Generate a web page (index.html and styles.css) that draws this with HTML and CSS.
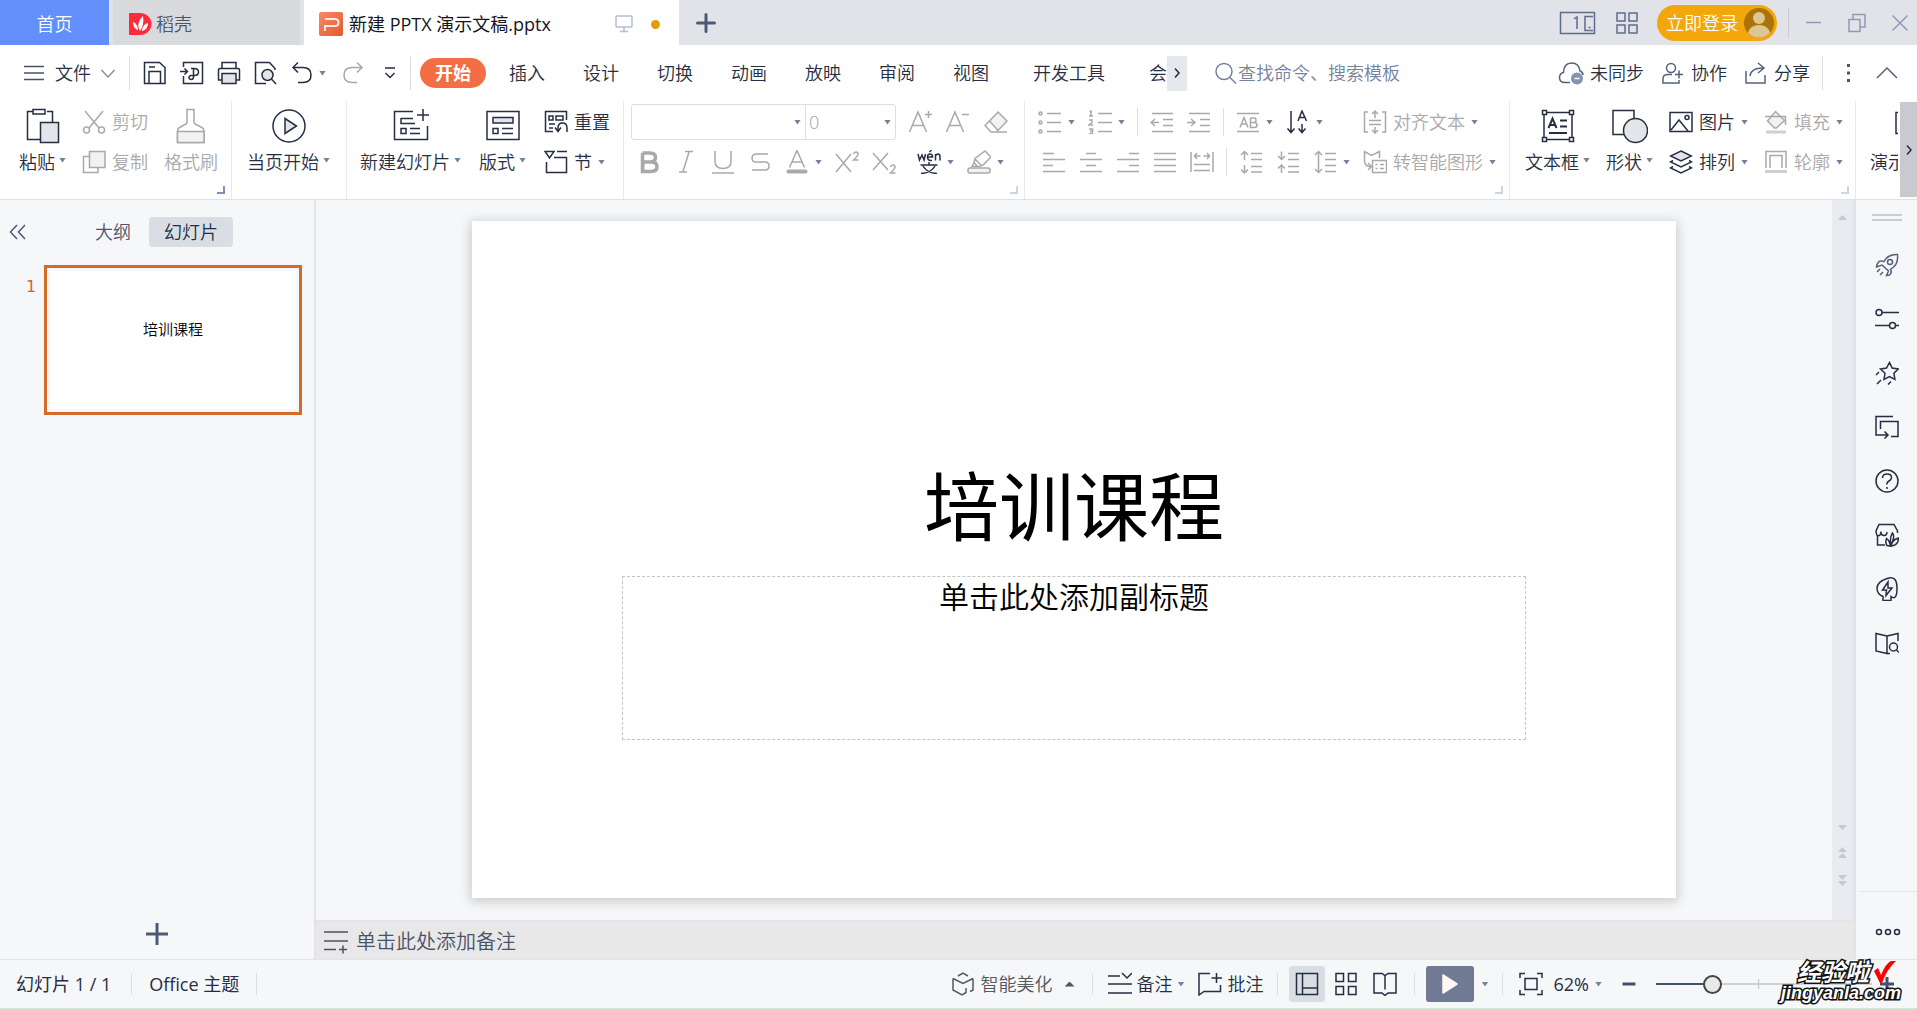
FILE: index.html
```html
<!DOCTYPE html>
<html lang="zh-CN">
<head>
<meta charset="utf-8">
<title>新建 PPTX 演示文稿.pptx</title>
<link rel="stylesheet" href="styles.css">
</head>
<body>
<header class="titlebar">
  <button class="doc-tab home-tab">首页</button>
  <button class="doc-tab docer-tab">
    <svg width="23" height="24" viewBox="0 0 23 24"><path d="M0 1h11a11.500 11 0 0 1 0 22H0z" fill="#ff2b3a"/><path d="M11 19c-3-4-2-11 3-15 1 6 0 11-3 15zM9 18c-4-1-5-5-5-8 3 1 5 4 5 8zM13 19c0-4 2-7 6-8 0 4-2 7-6 8z" fill="#fff"/></svg>
    <span>稻壳</span>
  </button>
  <div class="doc-tab active-tab">
    <svg width="24" height="24" viewBox="0 0 24 24"><defs><linearGradient id="pg" x1="0" y1="0" x2="1" y2="1"><stop offset="0" stop-color="#f88a6a"/><stop offset="1" stop-color="#e35a2a"/></linearGradient></defs><rect width="24" height="24" rx="2" fill="url(#pg)"/><path class="brand-stroke" d="M6 7h10q3.500 0 3.500 3.500T16 14H6v5"/></svg>
    <span class="doc-name">新建 PPTX 演示文稿.pptx</span>
    <svg class="monitor" width="18" height="18" viewBox="0 0 18 18"><path d="M2 1h14q1 0 1 1v9q0 1-1 1H2q-1 0-1-1V2q0-1 1-1zM9 12v4M5 16.500h8"/></svg>
    <i class="unsaved"></i>
  </div>
  <button class="new-tab" aria-label="新建"><svg width="20" height="20" viewBox="0 0 20 20"><path d="M10 1.500v17M1.500 10h17"/></svg></button>
  <div class="window-tools">
    <button aria-label="单页"><svg width="38" height="24" viewBox="0 0 38 24"><path d="M1.500 1.500h34v21h-34zM34 5.500h-8v14h8M29.500 16.500h2"/><path d="M15 8l3-2v12"/></svg></button>
    <button aria-label="应用"><svg width="24" height="24" viewBox="0 0 24 24"><path d="M2 2h8v8H2zM14 2h8v8h-8zM2 14h8v8H2zM14 14h8v8h-8z"/></svg></button>
    <button class="login"><span>立即登录</span><svg width="30" height="30" viewBox="0 0 30 30"><circle cx="15" cy="15" r="15" fill="#a97408"/><circle cx="15" cy="10" r="6" fill="#dfc494"/><path d="M4 25q2-8 11-8t11 8a15 15 0 0 1-22 0z" fill="#dfc494"/></svg></button>
    <i class="bar"></i>
    <button class="win" aria-label="最小化"><svg width="18" height="20" viewBox="0 0 18 20"><path d="M1 9.500h15"/></svg></button>
    <button class="win" aria-label="还原"><svg width="18" height="20" viewBox="0 0 18 20"><path d="M1 6.500h11v12H1zM5 6V1.500h12V14h-5"/></svg></button>
    <button class="win" aria-label="关闭"><svg width="18" height="20" viewBox="0 0 18 20"><path d="M1.500 2.500l15 15M16.500 2.500l-15 15"/></svg></button>
  </div>
</header>

<nav class="menubar">
  <button class="file-menu">
    <svg width="24" height="24" viewBox="0 0 24 24"><path d="M2 5.500h20M2 12h20M2 18.500h20"/></svg>
    <span>文件</span>
    <svg width="16" height="24" viewBox="0 0 16 24" class="thin"><path d="M1.500 9l6.500 7 6.500-7"/></svg>
  </button>
  <i class="bar"></i>
  <div class="quick">
    <button aria-label="保存"><svg width="24" height="24" viewBox="0 0 24 24"><path d="M1.500 1.500h15l5.500 5V22.500h-20.500zM6 22v-11.500h11.500V22M6 6h6"/></svg></button>
    <button aria-label="输出"><svg width="24" height="24" viewBox="0 0 24 24"><path d="M3.500 6V1.500h19v21h-19V15M0 10.500h7.500M4.500 7.500l3 3-3 3M11 7.500h3q4.500 0 4.500 3.500t-4 3.500h-3q-2.500 0-2.500 2t2.500 2q2 0 2-3V8"/></svg></button>
    <button aria-label="打印"><svg width="24" height="24" viewBox="0 0 24 24"><path d="M5 7V1.500h14V7M5 19H1.500V9q0-1.500 1.500-1.500h18q1.500 0 1.500 1.500v10H19"/><path class="tint" d="M5 12.500h14v10H5z"/></svg></button>
    <button aria-label="预览"><svg width="24" height="24" viewBox="0 0 24 24"><path d="M12 22.500H1.500v-21h14l5.500 6V9"/><circle class="tint" cx="13.500" cy="14" r="5.500"/><path d="M17.500 18l4.500 5"/></svg></button>
    <button class="drop" aria-label="撤销"><svg width="22" height="24" viewBox="0 0 22 24"><path d="M7 1.500L2 6.500l5 5M2.500 6.500H12q8 0 8 7.500T12 21.500H7"/></svg><i class="caret"></i></button>
    <button class="off" aria-label="恢复"><svg width="22" height="24" viewBox="0 0 22 24"><path d="M15 1.500l5 5-5 5M19.500 6.500H10q-8 0-8 7.500t8 7.500h5"/></svg></button>
    <button aria-label="更多"><svg width="14" height="24" viewBox="0 0 14 24"><path d="M2 7h10M2.500 12l4.500 4.500L11.500 12"/></svg></button>
  </div>
  <i class="bar"></i>
  <div class="tabs">
    <button class="current">开始</button>
    <button>插入</button><button>设计</button><button>切换</button><button>动画</button><button>放映</button><button>审阅</button><button>视图</button><button class="dev">开发工具</button><button>会</button>
  </div>
  <button class="tab-next" aria-label="更多选项卡"><svg width="8" height="12" viewBox="0 0 8 12"><path d="M2 1.500L6 6l-4 4.500"/></svg></button>
  <label class="search"><svg width="24" height="24" viewBox="0 0 24 24"><circle cx="10" cy="10.500" r="8"/><path d="M16 16.500l6 6"/></svg><input type="text" aria-label="搜索" placeholder="查找命令、搜索模板"></label>
  <div class="share">
    <button><svg width="26" height="24" viewBox="0 0 26 24"><path d="M12 21.500H7q-5.500 0-5.500-5 0-4 4-5Q6 2 13.500 2t8.500 8q3 1 3 4"/><circle cx="19" cy="17.500" r="6" class="solid"/><path d="M16.500 17.500h5" stroke="#fff"/></svg><span>未同步</span></button>
    <button><svg width="24" height="24" viewBox="0 0 24 24"><circle cx="10" cy="7" r="4.500"/><path d="M11 13.500H7q-5 0-5 4v4.500h16v-3M18 9.500v8M14 13.500h8"/></svg><span>协作</span></button>
    <button><svg width="24" height="24" viewBox="0 0 24 24"><path d="M2 10v12h19v-8M6 15q1-8 13-8M14 2l6 5-6 5"/></svg><span>分享</span></button>
  </div>
  <i class="bar"></i>
  <button class="tail" aria-label="更多"><svg width="4" height="24" viewBox="0 0 4 24"><path class="solid-dark" d="M0 3h3v3H0zM0 10.500h3v3H0zM0 18h3v3H0z"/></svg></button>
  <button class="tail" aria-label="折叠功能区"><svg width="24" height="24" viewBox="0 0 24 24"><path d="M2 17L12 7l10 10"/></svg></button>
</nav>

<section class="ribbon">
  <div class="groups">
    <div class="group paste-group">
      <button class="big"><svg width="36" height="36" viewBox="0 0 36 36"><path d="M8 3.500H2.500v28H15M22 3.500h5.500V14M8 1.500h12v4.500H8z"/><path class="tint" d="M15.500 14.500h18v20h-18z"/></svg><span>粘贴<i class="caret"></i></span></button>
      <div class="stack">
        <button class="off"><svg width="24" height="24" viewBox="0 0 24 24"><path d="M3 1l14 17M21 1L7 18"/><circle cx="4.500" cy="20" r="3"/><circle cx="19.500" cy="20" r="3"/></svg><span>剪切</span></button>
        <button class="off"><svg width="24" height="24" viewBox="0 0 24 24"><path d="M7 6.500H1.500v16H16V18"/><path class="tint" d="M7.500 1.500H23v16H7.500z"/></svg><span>复制</span></button>
      </div>
      <button class="big off"><svg width="36" height="36" viewBox="0 0 36 36"><path d="M14 1.500h7V14q0 2 3 3l5 2.500q2 1 2 4v11H4.500v-11q0-3 2-4L11 17q3-1 3-3z"/><path class="tint" d="M4.500 23.500H31v11H4.500z"/></svg><span>格式刷</span></button>
      <i class="launcher"></i>
    </div>
    <div class="group play-group">
      <button class="big"><svg width="36" height="36" viewBox="0 0 36 36"><circle cx="18" cy="18" r="16"/><path class="tint" d="M14 10.500L25.500 18 14 25.500z"/></svg><span>当页开始<i class="caret"></i></span></button>
    </div>
    <div class="group slide-group">
      <button class="big"><svg width="36" height="36" viewBox="0 0 36 36"><path d="M20 3.500H1.500v28h33V18M8 10.500h12M8 10v5.500h14M8 20.500h5v5H8zM17 20.500h10M17 25.500h10M30 1v12M24 7h12"/></svg><span>新建幻灯片<i class="caret"></i></span></button>
      <button class="big"><svg width="36" height="36" viewBox="0 0 36 36"><path d="M2 3.500h32v28H2z"/><path class="tint" d="M8 9.500h20v5.500H8z"/><path d="M8 20.500h5v5H8zM17 20.500h11M17 25.500h11"/></svg><span>版式<i class="caret"></i></span></button>
      <div class="stack">
        <button><svg width="24" height="24" viewBox="0 0 24 24"><path d="M9 21.500H1.500v-20H22.500V10M5 6h4v4H5zM12 6h7v4h-7zM5 14h6M5 18h4M11 17.500l3 4 3-4M14 21v-3q0-5 4.500-5t4.500 5v4"/></svg><span>重置</span></button>
        <button><svg width="24" height="24" viewBox="0 0 24 24"><path d="M1 1.500h9L5.500 8zM2.500 12v10.500h20v-15H10M13 1.500h10"/></svg><span>节</span><i class="caret"></i></button>
      </div>
    </div>
    <div class="group font-group">
      <div class="stack">
        <div class="row">
          <div class="combos">
            <label class="combo face"><select aria-label="字体"><option></option></select><i class="caret"></i></label>
            <label class="combo size"><select aria-label="字号"><option>0</option></select><i class="caret"></i></label>
          </div>
          <button class="off" aria-label="增大字号"><svg width="24" height="24" viewBox="0 0 24 24"><path d="M1.500 22l8.500-20 8.500 20M4.500 15.500h11M17 4.500h7M20.500 1v7"/></svg></button>
          <button class="off" aria-label="减小字号"><svg width="24" height="24" viewBox="0 0 24 24"><path d="M1.500 22l8.500-20 8.500 20M4.500 15.500h11M17 4.500h7"/></svg></button>
          <button class="off eraser" aria-label="清除格式"><svg width="24" height="24" viewBox="0 0 24 24"><path class="tint" d="M14 2l9 9-9 9.500L5.500 11z"/><path d="M5.500 11L1 15.500l6 6.500h16M14 20.500L12 22.500"/></svg></button>
        </div>
        <div class="row tools">
          <button class="off" aria-label="加粗"><svg width="24" height="24" viewBox="0 0 24 24"><path d="M5.500 3H13q5.500 0 5.500 4.500T13 12H6M6 12h8q6 0 6 4.700t-6 4.800H5.500zM5.500 3v18" stroke-width="3.500"/></svg></button>
          <button class="off" aria-label="倾斜"><svg width="24" height="24" viewBox="0 0 24 24"><path d="M11 1.500h8M5 22h8M15 2L9 21.500"/></svg></button>
          <button class="off" aria-label="下划线"><svg width="24" height="24" viewBox="0 0 24 24"><path d="M4 1v10q0 7.500 8 7.500t8-7.500V1M1 23h22"/></svg></button>
          <button class="off" aria-label="删除线"><svg width="24" height="24" viewBox="0 0 24 24"><path d="M20 4H9Q4 4 4 8t4 4h9q4 0 4 4t-4 4H4"/></svg></button>
          <button class="off drop" aria-label="字体颜色"><svg width="24" height="24" viewBox="0 0 24 24"><path d="M4.500 17.500l7.500-17 7.500 17M7 12h10"/><path d="M3.500 21.500h17" stroke-width="4" stroke-linecap="round"/></svg><i class="caret"></i></button>
          <button class="off" aria-label="上标"><svg width="24" height="24" viewBox="0 0 24 24"><path d="M1 4l15 18M16 4L1 22M18.500 4q.5-2 2.500-2t2 2q0 2-4.500 6h5"/></svg></button>
          <button class="off" aria-label="下标"><svg width="24" height="24" viewBox="0 0 24 24"><path d="M1 3l15 17M16 3L1 20M18.500 17q.5-2 2.500-2t2 2q0 2-4.500 6h5"/></svg></button>
          <button class="drop pinyin" aria-label="拼音"><svg width="24" height="24" viewBox="0 0 24 24"><path d="M1 4l1.500 6L5 5l2 5L8.500 4M10.500 7h5q0-3-2.500-3t-2.500 3 2.500 3.500h2M12.500 2L14.500 0M18.500 10.500V4M18.500 6q1-2 2.500-2 2 0 2 3v3.500M12 12v2.500M3.500 15h17M6 16q4 7 14 7.500M18 16q-4 7-14 7.500"/></svg><i class="caret"></i></button>
          <button class="off drop" aria-label="突出显示"><svg width="24" height="24" viewBox="0 0 24 24"><path d="M5 16.500l2-4 1-4L18 1l6 6-8 8-4 1.500zM8 9l7 7M7 12.500l3.500 4"/><rect class="tint" x="1" y="18" width="22" height="5" rx="2"/></svg><i class="caret"></i></button>
        </div>
      </div>
      <i class="launcher pale"></i>
    </div>
    <div class="group para-group">
      <div class="stack">
        <div class="row">
          <button class="off drop" aria-label="项目符号"><svg width="24" height="24" viewBox="0 0 24 24"><path d="M9 3.500h14M9 12.500h14M9 21.500h14"/><circle cx="2.500" cy="3.500" r="1.500"/><circle cx="2.500" cy="12.500" r="1.500"/><circle cx="2.500" cy="21.500" r="1.500"/></svg><i class="caret"></i></button>
          <button class="off drop" aria-label="编号"><svg width="24" height="24" viewBox="0 0 24 24"><path d="M10 3.500h14M10 12.500h14M10 21.500h14M1.500 2L3 1v5M1 6h4M1 10h3v2.500L1 15h4M1 19h3.500v4.500H1M2 21h2"/></svg><i class="caret"></i></button>
          <i class="bar"></i>
          <button class="off" aria-label="减少缩进"><svg width="24" height="24" viewBox="0 0 24 24"><path d="M2 3.500h21M13 9.500h10M13 15.500h10M2 21.500h21M1 12.500h8M5 9l-4 3.500L5 16"/></svg></button>
          <button class="off" aria-label="增加缩进"><svg width="24" height="24" viewBox="0 0 24 24"><path d="M2 3.500h21M13 9.500h10M13 15.500h10M2 21.500h21M0 12.500h8M4 9l4 3.500L4 16"/></svg></button>
          <i class="bar"></i>
          <button class="off drop" aria-label="文字方向"><svg width="24" height="24" viewBox="0 0 24 24"><path d="M1 3.500h22M1 21.500h22M4 17.500L8 7.500l4 10M5.500 14h5M14.500 8v9.500h4q2.500 0 2.500-2.500t-2.500-2.500h-4M14.500 8H18q2 0 2 2.200t-2 2.300"/></svg><i class="caret"></i></button>
          <button class="drop" aria-label="排序"><svg width="24" height="24" viewBox="0 0 24 24"><path d="M5 1v21M1.500 18.500L5 22.500l3.500-4M12 11l4-10 4.500 10M13.500 7.500h6M16 14v8M12.500 18.500l3.500 4 3.500-4"/></svg><i class="caret"></i></button>
        </div>
        <div class="row aligns">
          <button class="off" aria-label="左对齐"><svg width="24" height="24" viewBox="0 0 24 24"><path d="M1 3.500h11M1 9.500h22M1 15.500h10M1 21.500h22"/></svg></button>
          <button class="off" aria-label="居中"><svg width="24" height="24" viewBox="0 0 24 24"><path d="M7 3.500h10M1 9.500h22M7 15.500h10M1 21.500h22"/></svg></button>
          <button class="off" aria-label="右对齐"><svg width="24" height="24" viewBox="0 0 24 24"><path d="M13 3.500h10M1 9.500h22M13 15.500h10M1 21.500h22"/></svg></button>
          <button class="off" aria-label="两端对齐"><svg width="24" height="24" viewBox="0 0 24 24"><path d="M1 3.500h22M1 9.500h22M1 15.500h22M1 21.500h22"/></svg></button>
          <button class="off" aria-label="分散对齐"><svg width="24" height="24" viewBox="0 0 24 24"><path d="M1 2v20M23 2v20M4 14.500h16M4 20.500h16M4.500 6h6M13.500 6h6M7 3L4.500 6 7 9M17 3l2.500 3L17 9"/></svg></button>
          <i class="bar"></i>
          <button class="off" aria-label="增大段距"><svg width="24" height="24" viewBox="0 0 24 24"><path d="M12 3.500h11M12 9.500h11M12 16.500h11M12 22h11M5.500 10V2M2 5l3.500-3.500L9 5M5.500 15v8M2 19.500L5.500 23 9 19.500"/></svg></button>
          <button class="off" aria-label="减小段距"><svg width="24" height="24" viewBox="0 0 24 24"><path d="M12 3.500h11M12 9.500h11M12 16.500h11M12 22h11M5.500 1.500v8M2 6l3.500 3.500L9 6M5.500 23v-8M2 18.500L5.500 15 9 18.500"/></svg></button>
          <button class="off drop" aria-label="行距"><svg width="24" height="24" viewBox="0 0 24 24"><path d="M12 3.500h11M12 9.500h11M12 15.500h11M12 21.500h11M5.500 1.500v21M2 5l3.500-3.500L9 5M2 19l3.500 3.500L9 19"/></svg><i class="caret"></i></button>
        </div>
      </div>
      <div class="stack">
        <button class="off"><svg width="24" height="24" viewBox="0 0 24 24"><path d="M5 2H1.500v20H5M19 2h3.500v20H19M6 10.500h12M6 14.500h12M12 8V1M9 4l3-3 3 3M12 17v6M9 20l3 3 3-3"/></svg><span>对齐文本</span><i class="caret"></i></button>
        <button class="off"><svg width="24" height="24" viewBox="0 0 24 24"><path d="M8 16.500H6q-4.500-1-4.500-6V1.500l7 4 8-4V8M5 13l3.500 3.500L5 20"/><path d="M9.500 10.500h14v12h-14zM12.500 14.500h2M17 14.500h4M12.500 18.500h2M17 18.500h4"/></svg><span>转智能图形</span><i class="caret"></i></button>
      </div>
      <i class="launcher pale"></i>
    </div>
    <div class="group draw-group">
      <button class="big"><svg width="36" height="36" viewBox="0 0 36 36"><path d="M4 4.500h28v27H4z"/><path class="node" d="M2.500 2.500h4v4h-4zM29.500 2.500h4v4h-4zM2.500 29.500h4v4h-4zM29.500 29.500h4v4h-4z"/><path d="M8.500 20L12.500 10.500 16.500 20M10 17h5M20 12.500h7M20 18.500h7M9 25h18" stroke-width="2"/></svg><span>文本框<i class="caret"></i></span></button>
      <button class="big"><svg width="36" height="36" viewBox="0 0 36 36"><path d="M1 2.500h21v24H1z"/><circle class="tint" cx="23.500" cy="22.500" r="12"/></svg><span>形状<i class="caret"></i></span></button>
      <div class="stack">
        <button><svg width="24" height="24" viewBox="0 0 24 24"><path d="M1 2.500h22v19H1zM2 20l8-10 9 11"/><circle cx="18" cy="7.500" r="2"/></svg><span>图片</span><i class="caret"></i></button>
        <button><svg width="24" height="24" viewBox="0 0 24 24"><path class="tint" d="M12 1l10.500 5L12 11 1.500 6z"/><path d="M4 10.500L1.500 12 12 17l10.500-5-2.500-1.500M4 16.500L1.500 18 12 23l10.500-5-2.500-1.500"/></svg><span>排列</span><i class="caret"></i></button>
      </div>
      <div class="stack">
        <button class="off"><svg width="24" height="24" viewBox="0 0 24 24"><path class="tint" d="M11.500 1.500l9 9-8 7.500h-2L3.500 11z"/><path d="M1 6.500h20.500V15"/><path d="M2 22h20" stroke="#cfcfd2" stroke-width="3"/></svg><span>填充</span><i class="caret"></i></button>
        <button class="off"><svg width="24" height="24" viewBox="0 0 24 24"><path d="M2 18V1.500h20V18M6 18V5.500h12V18"/><path d="M1 21.500h22" stroke="#cfcfd2" stroke-width="3"/></svg><span>轮廓</span><i class="caret"></i></button>
      </div>
      <i class="launcher pale"></i>
    </div>
    <div class="group show-group">
      <button class="big"><svg width="36" height="36" viewBox="0 0 36 36"><path d="M20 4.500H8v21h12"/></svg><span>演示</span></button>
    </div>
  </div>
  <button class="ribbon-next" aria-label="向右滚动"><svg width="8" height="12" viewBox="0 0 8 12"><path d="M2 1.500L6 6l-4 4.500"/></svg></button>
</section>

<main class="workspace">
  <aside class="outline">
    <div class="outline-head">
      <button class="collapse" aria-label="收起"><svg width="18" height="16" viewBox="0 0 18 16"><path d="M8 1L1.500 8 8 15M16 1L9.500 8l6.500 7"/></svg></button>
      <button class="pane-tab">大纲</button>
      <button class="pane-tab selected">幻灯片</button>
    </div>
    <div class="thumb-row">
      <span class="thumb-no">1</span>
      <div class="thumb"><div>培训课程</div></div>
    </div>
    <button class="add-slide" aria-label="新建幻灯片"><svg width="24" height="24" viewBox="0 0 24 24"><path d="M12 1v22M1 12h22"/></svg></button>
  </aside>
  <section class="editor">
    <div class="stage">
      <div class="canvas">
        <article class="slide">
          <h1>培训课程</h1>
          <p>单击此处添加副标题</p>
        </article>
      </div>
      <div class="scroll">
        <i class="arrow up"></i>
        <div class="scroll-end"><i class="arrow down"></i><span><i class="arrow up"></i><i class="arrow up"></i></span><span><i class="arrow down"></i><i class="arrow down"></i></span></div>
      </div>
    </div>
    <div class="notes"><svg width="24" height="24" viewBox="0 0 24 24"><path d="M0 2h24M0 11h24M0 19.500h12M15 19.500h8M19 15.500v8"/></svg><span>单击此处添加备注</span></div>
  </section>
  <aside class="sidebar">
    <i class="grip"></i>
    <button aria-label="快捷" class="slate"><svg width="24" height="24" viewBox="0 0 24 24"><path d="M22.500 1.500q1 9-5 13.500l-2 1.500q2 3-1 5.500l-3 .5 2-4.500L7 12l-5.500 2q0-3 2.500-5.500 2-1 5 0Q13 1 22.500 1.500z"/><circle cx="15" cy="9" r="2.500"/><path d="M2 19l3-3M5 22l3-3"/></svg></button>
    <button aria-label="属性"><svg width="24" height="24" viewBox="0 0 24 24"><circle cx="4" cy="5.500" r="3"/><circle cx="17.500" cy="18.500" r="3"/><path d="M7 5.500h17M0 18.500h14.500M20.500 18.500H24"/></svg></button>
    <button aria-label="动画"><svg width="24" height="24" viewBox="0 0 24 24"><path d="M14.500 1.500l2.700 5.500 6 1-4.300 4.300 1 6-5.400-2.800-5.500 2.800 1-6L5.500 8l6-1zM1 14l3-3M2 23l4-4M13 23.500l3-3"/></svg></button>
    <button aria-label="切换"><svg width="24" height="24" viewBox="0 0 24 24"><path d="M18 1.500H1v18.500h11M9.500 16.500l3.500 3.500-3.500 3.500M5.500 14V6.500H23v15h-7"/></svg></button>
    <button aria-label="帮助"><svg width="24" height="24" viewBox="0 0 24 24"><circle cx="12" cy="12" r="11"/><path d="M7.500 9q0-4 4.500-4t4.500 3.500q0 2-2.500 3.500t-2 3.500M12 18v2"/></svg></button>
    <button aria-label="稻壳"><svg width="24" height="24" viewBox="0 0 24 24"><path d="M10 22H2.500v-9Q1 11 1 8l3-6.500h15L22.500 8v2M2 12.500q4 1 4-4M6 9q0 3.500 3 3.500t3-3.500M12 22.500q-2-3-.5-7 3 2 4 7.500zM15.500 22q-1-8 2-12 3 4-2 12zM16.500 23q0-6 7-8 0 7-7 8z"/></svg></button>
    <button aria-label="灵感"><svg width="24" height="24" viewBox="0 0 24 24"><path d="M8 23.500v-4Q2 17 2 11T12 1.500 22 11t-6 8.500v4zM13 5l-5.500 8h4l-.5 5.500L17 11h-4z"/></svg></button>
    <button aria-label="查阅"><svg width="24" height="24" viewBox="0 0 24 24"><path d="M12 5L1 2.500v17.500l11 2.500zM12 5l11-2.500V10M12 22.500h3"/><circle cx="18.500" cy="16" r="4"/><path d="M21.500 19l2.500 2.500"/></svg></button>
    <button class="more" aria-label="更多"><svg width="26" height="8" viewBox="0 0 26 8"><circle cx="4" cy="4" r="2.500"/><circle cx="13" cy="4" r="2.500"/><circle cx="22" cy="4" r="2.500"/></svg></button>
  </aside>
</main>

<footer class="status">
  <span class="page">幻灯片 1 / 1</span><i class="bar"></i><span class="theme">Office 主题</span><i class="bar"></i>
  <div class="status-tools">
    <button class="beautify"><svg width="24" height="24" viewBox="0 0 24 24"><path d="M7 4l5-3 5 3M2 6.500l10 5 10-5M2 6.500V18l9 5 4-2.500V16M22 6.500V18l-3 1.500"/></svg><span>智能美化</span><i class="caret flip"></i></button>
    <i class="bar"></i>
    <button class="tight"><svg width="24" height="24" viewBox="0 0 24 24"><path d="M0 4h12M0 12h24M0 21h24M14 1l5 5 5-5"/></svg><span>备注</span><i class="caret"></i></button>
    <button><svg width="24" height="24" viewBox="0 0 24 24"><path d="M12 1.500H1V23l5-3.500h16.500V13M18.500 1v10M13.500 6h10.500"/></svg><span>批注</span></button>
    <i class="bar"></i>
    <button class="view on" aria-label="普通"><svg width="24" height="24" viewBox="0 0 24 24"><path d="M1.500 1.500h21v21h-21zM7.500 1.500v21M7.500 16h15"/></svg></button>
    <button class="view" aria-label="浏览"><svg width="24" height="24" viewBox="0 0 24 24"><path d="M2 1.500h7.500v8H2zM14.500 1.500H22v8h-7.500zM2 14.500h7.500v8H2zM14.500 14.500H22v8h-7.500z"/></svg></button>
    <button class="view" aria-label="阅读"><svg width="24" height="24" viewBox="0 0 24 24"><path d="M12 3.500v14M1 1.500h8l3 2 3-2h8V21h-8l-3 2.500L9 21H1z"/></svg></button>
    <i class="bar"></i>
    <button class="play" aria-label="放映"><svg width="16" height="20" viewBox="0 0 16 20"><path d="M1 1v18l14-9z"/></svg></button>
    <i class="caret"></i>
    <i class="bar"></i>
    <button class="zoom-level"><svg width="24" height="24" viewBox="0 0 24 24"><path d="M1 6V1.500h5M18 1.500h5V6M23 18v4.500h-5M6 22.500H1V18M6 6.500h12v11H6z"/></svg><span>62%</span><i class="caret"></i></button>
    <button class="step" aria-label="缩小"><svg width="16" height="16" viewBox="0 0 16 16"><path d="M1.500 8h13"/></svg></button>
    <input class="zoom" type="range" min="0" max="100" value="24" aria-label="缩放">
    <button class="step" aria-label="放大"><svg width="16" height="16" viewBox="0 0 16 16"><path d="M1 8h14M8 1v14"/></svg></button>
  </div>
  <div class="mark"><b>经验啦</b><svg width="24" height="24" viewBox="0 0 24 24"><path d="M1 11l4-3 3 7Q13 3 18 1h5Q14 9 9 23H7z" fill="#f00"/></svg><strong>jingyanla.com</strong></div>
</footer>
</body>
</html>
```
FILE: styles.css
```css
* { box-sizing: border-box; }

:root {
  --ink: #262e42;
  --slate: #55617c;
  --off: #a9a9ab;
  --caret: #76829c;
  --panel: #f5f7f9;
  --rule: #e2e4e9;
}

body {
  margin: 0;
  min-height: 100vh;
  display: flex;
  flex-direction: column;
  background: #fff;
  color: var(--ink);
  font: 350 18px/24px "Open Sans", "Noto Sans CJK SC", sans-serif;
  white-space: nowrap;
  overflow-x: hidden;
}

button {
  display: flex;
  align-items: center;
  flex: none;
  padding: 0;
  border: 0;
  background: none;
  color: inherit;
  font: inherit;
}

svg {
  display: block;
  flex: none;
  fill: none;
  stroke: currentColor;
  stroke-width: 1.5;
}

.tint { fill: #e3e5e9; }
.off .tint { fill: #f2f2f3; }
.node { fill: #fff; }
.off { color: var(--off); }

.caret {
  flex: none;
  width: 7px;
  height: 5px;
  background: var(--caret);
  clip-path: polygon(0 0, 100% 0, 50% 100%);
}
.caret.flip { background: #555; clip-path: polygon(0 100%, 100% 100%, 50% 0); width: 10px; }

.bar { flex: none; width: 1px; background: #dcdee3; }

/* Title bar */
.titlebar { display: flex; height: 45px; background: #e2e3e8; }
.doc-tab { display: flex; align-items: center; gap: 4px; height: 45px; padding-top: 3px; }
.doc-tab svg { stroke: none; }
.home-tab { width: 109px; justify-content: center; background: #628ffc; color: #fff; margin-right: 4px; }
.docer-tab { width: 187px; padding-left: 16px; background: #d8dade; color: #4d5566; margin-right: 4px; }
.active-tab { width: 375px; padding-left: 15px; gap: 6px; background: #fff; color: #14161c; }
.doc-name, .page, .theme, .zoom-level { font-weight: 400; }
.doc-name { flex: 1; }
.brand-stroke { fill: none; stroke: #ffe9e0; stroke-width: 2; }
.active-tab .monitor { stroke: #b3bdd4; margin-right: 12px; }
.unsaved { width: 9px; height: 9px; margin-right: 19px; border-radius: 50%; background: #e69b06; }
.new-tab { margin-left: 17px; color: #4d5a75; }
.new-tab svg { stroke-width: 3; stroke-linecap: round; }
.window-tools { display: flex; align-items: center; gap: 18px; margin-left: auto; padding-right: 8px; color: #5f6c8a; }
.window-tools .bar { height: 30px; background: #c9ccd4; margin: 0 -2px 0 -7px; }
.window-tools .win { color: #8f9bb5; margin-right: 7px; }
.window-tools .win:last-child { margin-right: 0; }
.login { height: 36px; padding: 0 3px 0 9px; gap: 6px; border-radius: 18px; background: #f4a70c; color: #fff; }
.login svg { stroke: none; }

/* Menu bar */
.menubar { display: flex; align-items: center; height: 56px; padding-left: 22px; }
.menubar > .bar { height: 34px; }
.file-menu { gap: 9px; margin-right: 13px; }
.file-menu svg { color: #4b5263; }
.file-menu .thin { color: #8b8f98; }
.quick { display: flex; align-items: center; gap: 13px; padding: 0 13px; }
.quick .drop { gap: 6px; margin-right: 3px; }
.quick .off { margin-right: 6px; }
.tabs { display: flex; align-items: center; gap: 38px; padding-left: 9px; }
.tabs .current { height: 30px; padding: 0 15px; margin-right: -15px; border-radius: 15px; background: #f46e45; color: #fff; font-weight: 700; }
.tabs .dev { margin: 0 6px; }
.tab-next { width: 20px; height: 35px; justify-content: center; background: #e5e8ed; }
.search { display: flex; align-items: center; flex: 1; min-width: 0; margin-left: 27px; color: #76829c; }
.search input { flex: 1; min-width: 0; padding: 0; border: 0; outline: 0; background: none; font: inherit; color: var(--ink); }
.search input::placeholder { color: #76829c; opacity: 1; }
.share { display: flex; gap: 17px; margin-right: 12px; }
.share button { gap: 6px; }
.share svg { color: var(--slate); }
.share .solid { fill: #8693b0; stroke: none; }
.tail { margin-left: 24px; color: var(--slate); }
.tail + .tail { margin: 0 18px 0 24px; }
.solid-dark { fill: #4d566b; stroke: none; }

/* Ribbon */
.ribbon { display: flex; height: 99px; border-bottom: 1px solid #dfe1e5; }
.groups { display: flex; flex: 1; min-width: 0; overflow: hidden; margin-right: 2px; }
.group { position: relative; display: flex; flex: none; padding-bottom: 3px; border-right: 1px solid #e9eaed; }
.big { flex-direction: column; align-self: flex-start; padding-top: 7px; }
.big span { display: flex; align-items: center; gap: 4px; height: 36px; }
.big .caret { margin-bottom: 4px; }
.stack { display: flex; flex-direction: column; }
.stack > button, .row { display: flex; align-items: center; height: 40px; padding-top: 2px; }
.stack > button { gap: 6px; }
.row { gap: 13px; }
.row .drop { gap: 6px; }
.row .bar { height: 28px; margin: 0 -1px; }
.launcher { position: absolute; right: 6px; bottom: 5px; width: 8px; height: 8px; border: solid #8290b2; border-width: 0 2px 2px 0; }
.launcher.pale { border-color: #cdd4e4; }
.paste-group { padding-left: 19px; padding-right: 13px; gap: 16px; }
.play-group { padding-left: 15px; padding-right: 16px; }
.slide-group { padding-left: 13px; padding-right: 13px; gap: 18px; }
.font-group { padding-left: 7px; padding-right: 16px; }
.combos { display: flex; height: 36px; margin-right: -1px; border: 1px solid #dcdee3; border-radius: 3px; }
.combo { display: flex; align-items: center; padding-right: 4px; }
.combo + .combo { border-left: 1px solid #dcdee3; }
.combo select { flex: 1; min-width: 0; height: 34px; padding: 0 3px; border: 0; outline: 0; appearance: none; background: none; color: #a0a0a4; font: inherit; }
.face { width: 173px; }
.size { width: 90px; }
.eraser { margin-left: 2px; }
.tools { padding-left: 6px; }
.pinyin { margin-left: 8px; }
.para-group { padding-left: 13px; padding-right: 13px; gap: 13px; }
.aligns { padding-left: 4px; }
.draw-group { padding-left: 15px; padding-right: 12px; gap: 16px; }
.show-group { padding-left: 14px; border-right: 0; }
.show-group .big { align-items: flex-start; }
.show-group svg { margin-left: 18px; }
.ribbon-next { width: 17px; align-self: stretch; margin: 1px 0 2px; justify-content: center; background: #c9cacf; }

/* Workspace */
.workspace { display: flex; flex: 1; background: var(--panel); }
.outline { display: flex; flex-direction: column; width: 316px; border-right: 2px solid var(--rule); }
.outline-head { display: flex; align-items: center; padding: 17px 0 0 9px; }
.collapse { margin-right: 56px; color: #4d5a75; }
.pane-tab { height: 30px; padding: 0 12px; color: #4d5566; }
.pane-tab.selected { margin-left: 6px; padding: 0 15px; border-radius: 4px; background: #d9dee5; color: var(--ink); }
.thumb-row { display: flex; padding: 18px 12px 0 26px; }
.thumb-no { width: 18px; padding-top: 10px; color: #d4652a; font: 400 16px/24px "DejaVu Sans", sans-serif; }
.thumb { flex: 1; padding: 3px; border: 3px solid #d56b2b; background: var(--panel); }
.thumb div { height: 138px; padding-top: 46px; background: #fff; color: #000; font-size: 15px; text-align: center; }
.add-slide { align-self: center; margin-top: auto; padding-bottom: 13px; color: #4d5a75; }
.add-slide svg, .step svg { stroke-width: 3; }
.editor { display: flex; flex-direction: column; flex: 1; min-width: 0; }
.stage { display: flex; flex: 1; }
.canvas { flex: 1; min-width: 0; padding: 21px 156px; }
.slide { display: grid; grid-template-rows: 355fr 164fr 158fr; aspect-ratio: 1204 / 677; padding: 0 150px; background: #fff; box-shadow: 0 2px 10px 2px rgba(60, 60, 60, .22); color: #000; text-align: center; }
.slide h1 { align-self: end; margin: 0; padding-bottom: 20px; font-size: 75px; line-height: 100px; font-weight: 400; }
.slide p { margin: 0; border: 1px dashed #c4c4c4; font-size: 30px; line-height: 40px; }
.scroll { display: flex; flex-direction: column; justify-content: space-between; align-items: center; width: 21px; padding: 15px 0 34px; background: #e9ebf0; }
.arrow { display: block; width: 9px; height: 5px; background: #c6c8cd; }
.up { clip-path: polygon(50% 0, 100% 100%, 0 100%); }
.down { clip-path: polygon(0 0, 100% 0, 50% 100%); }
.scroll-end { display: grid; gap: 17px; }
.scroll-end span { display: grid; gap: 1px; }
.notes { display: flex; align-items: center; gap: 8px; height: 39px; padding: 3px 8px 0; border-top: 2px solid var(--rule); background: #e8e8e8; color: #4a5268; font-size: 20px; }
.sidebar { display: flex; flex-direction: column; align-items: center; gap: 30px; width: 64px; padding-top: 14px; border-left: 3px solid var(--rule); }
.grip { width: 30px; height: 7px; margin-bottom: 2px; border: solid #cbccd0; border-width: 2px 0; }
.slate { color: var(--slate); }
.sidebar .more { justify-content: center; align-self: stretch; height: 68px; margin: auto 0 0 3px; padding-top: 12px; border-top: 1px solid var(--rule); }

/* Status bar */
.status { position: relative; display: flex; align-items: center; height: 50px; padding-left: 16px; border-top: 1px solid var(--rule); border-bottom: 1px solid #c8ecd9; background: var(--panel); }
.status .bar { height: 22px; }
.page { margin-right: 20px; }
.theme { margin: 0 17px; }
.status-tools { display: flex; align-items: center; gap: 13px; margin-left: auto; padding-right: 22px; }
.status-tools button { gap: 6px; }
.status-tools .beautify { color: #55585f; margin-right: 4px; }
.beautify .caret { margin-left: 6px; }
.status-tools .tight { margin-left: 2px; gap: 5px; }
.status-tools .view { width: 36px; height: 36px; margin: 0 -5px; justify-content: center; border-radius: 3px; }
.status-tools .on { margin-left: -2px; background: #d9dee5; }
.view + .bar { margin-left: 3px; }
.play { width: 48px; height: 36px; margin-left: -2px; justify-content: center; border-radius: 3px; background: #707a94; }
.play path { fill: #fff8f0; stroke: #fff8f0; stroke-linejoin: round; }
.play + .caret { margin-left: -5px; }
.zoom-level { margin: 0 6px 0 3px; }
.zoom-level span { margin-left: 5px; }
.step { color: #42506b; }
.zoom { width: 216px; height: 20px; margin: 0 -6px 0 6px; appearance: none; background: linear-gradient(#bfc5d0, #bfc5d0) 102px 50% / 1px 10px no-repeat, linear-gradient(90deg, #42506b 57px, #cdd2da 57px) 0 50% / 100% 2px no-repeat; }
.zoom::-webkit-slider-thumb { appearance: none; width: 19px; height: 19px; border: 2px solid #454545; border-radius: 50%; background: #e9e9ea; }
.mark { position: absolute; right: 16px; top: 0; display: grid; grid-template-columns: 1fr auto; column-gap: 4px; color: #fff; -webkit-text-stroke: 3px #111; paint-order: stroke fill; }
.mark b { font-size: 24px; line-height: 24px; font-style: italic; font-weight: 700; text-align: right; }
.mark svg { stroke: none; margin-right: 4px; }
.mark strong { grid-column: 1 / 3; font: italic 700 18px/18px "Liberation Sans", sans-serif; }
```
